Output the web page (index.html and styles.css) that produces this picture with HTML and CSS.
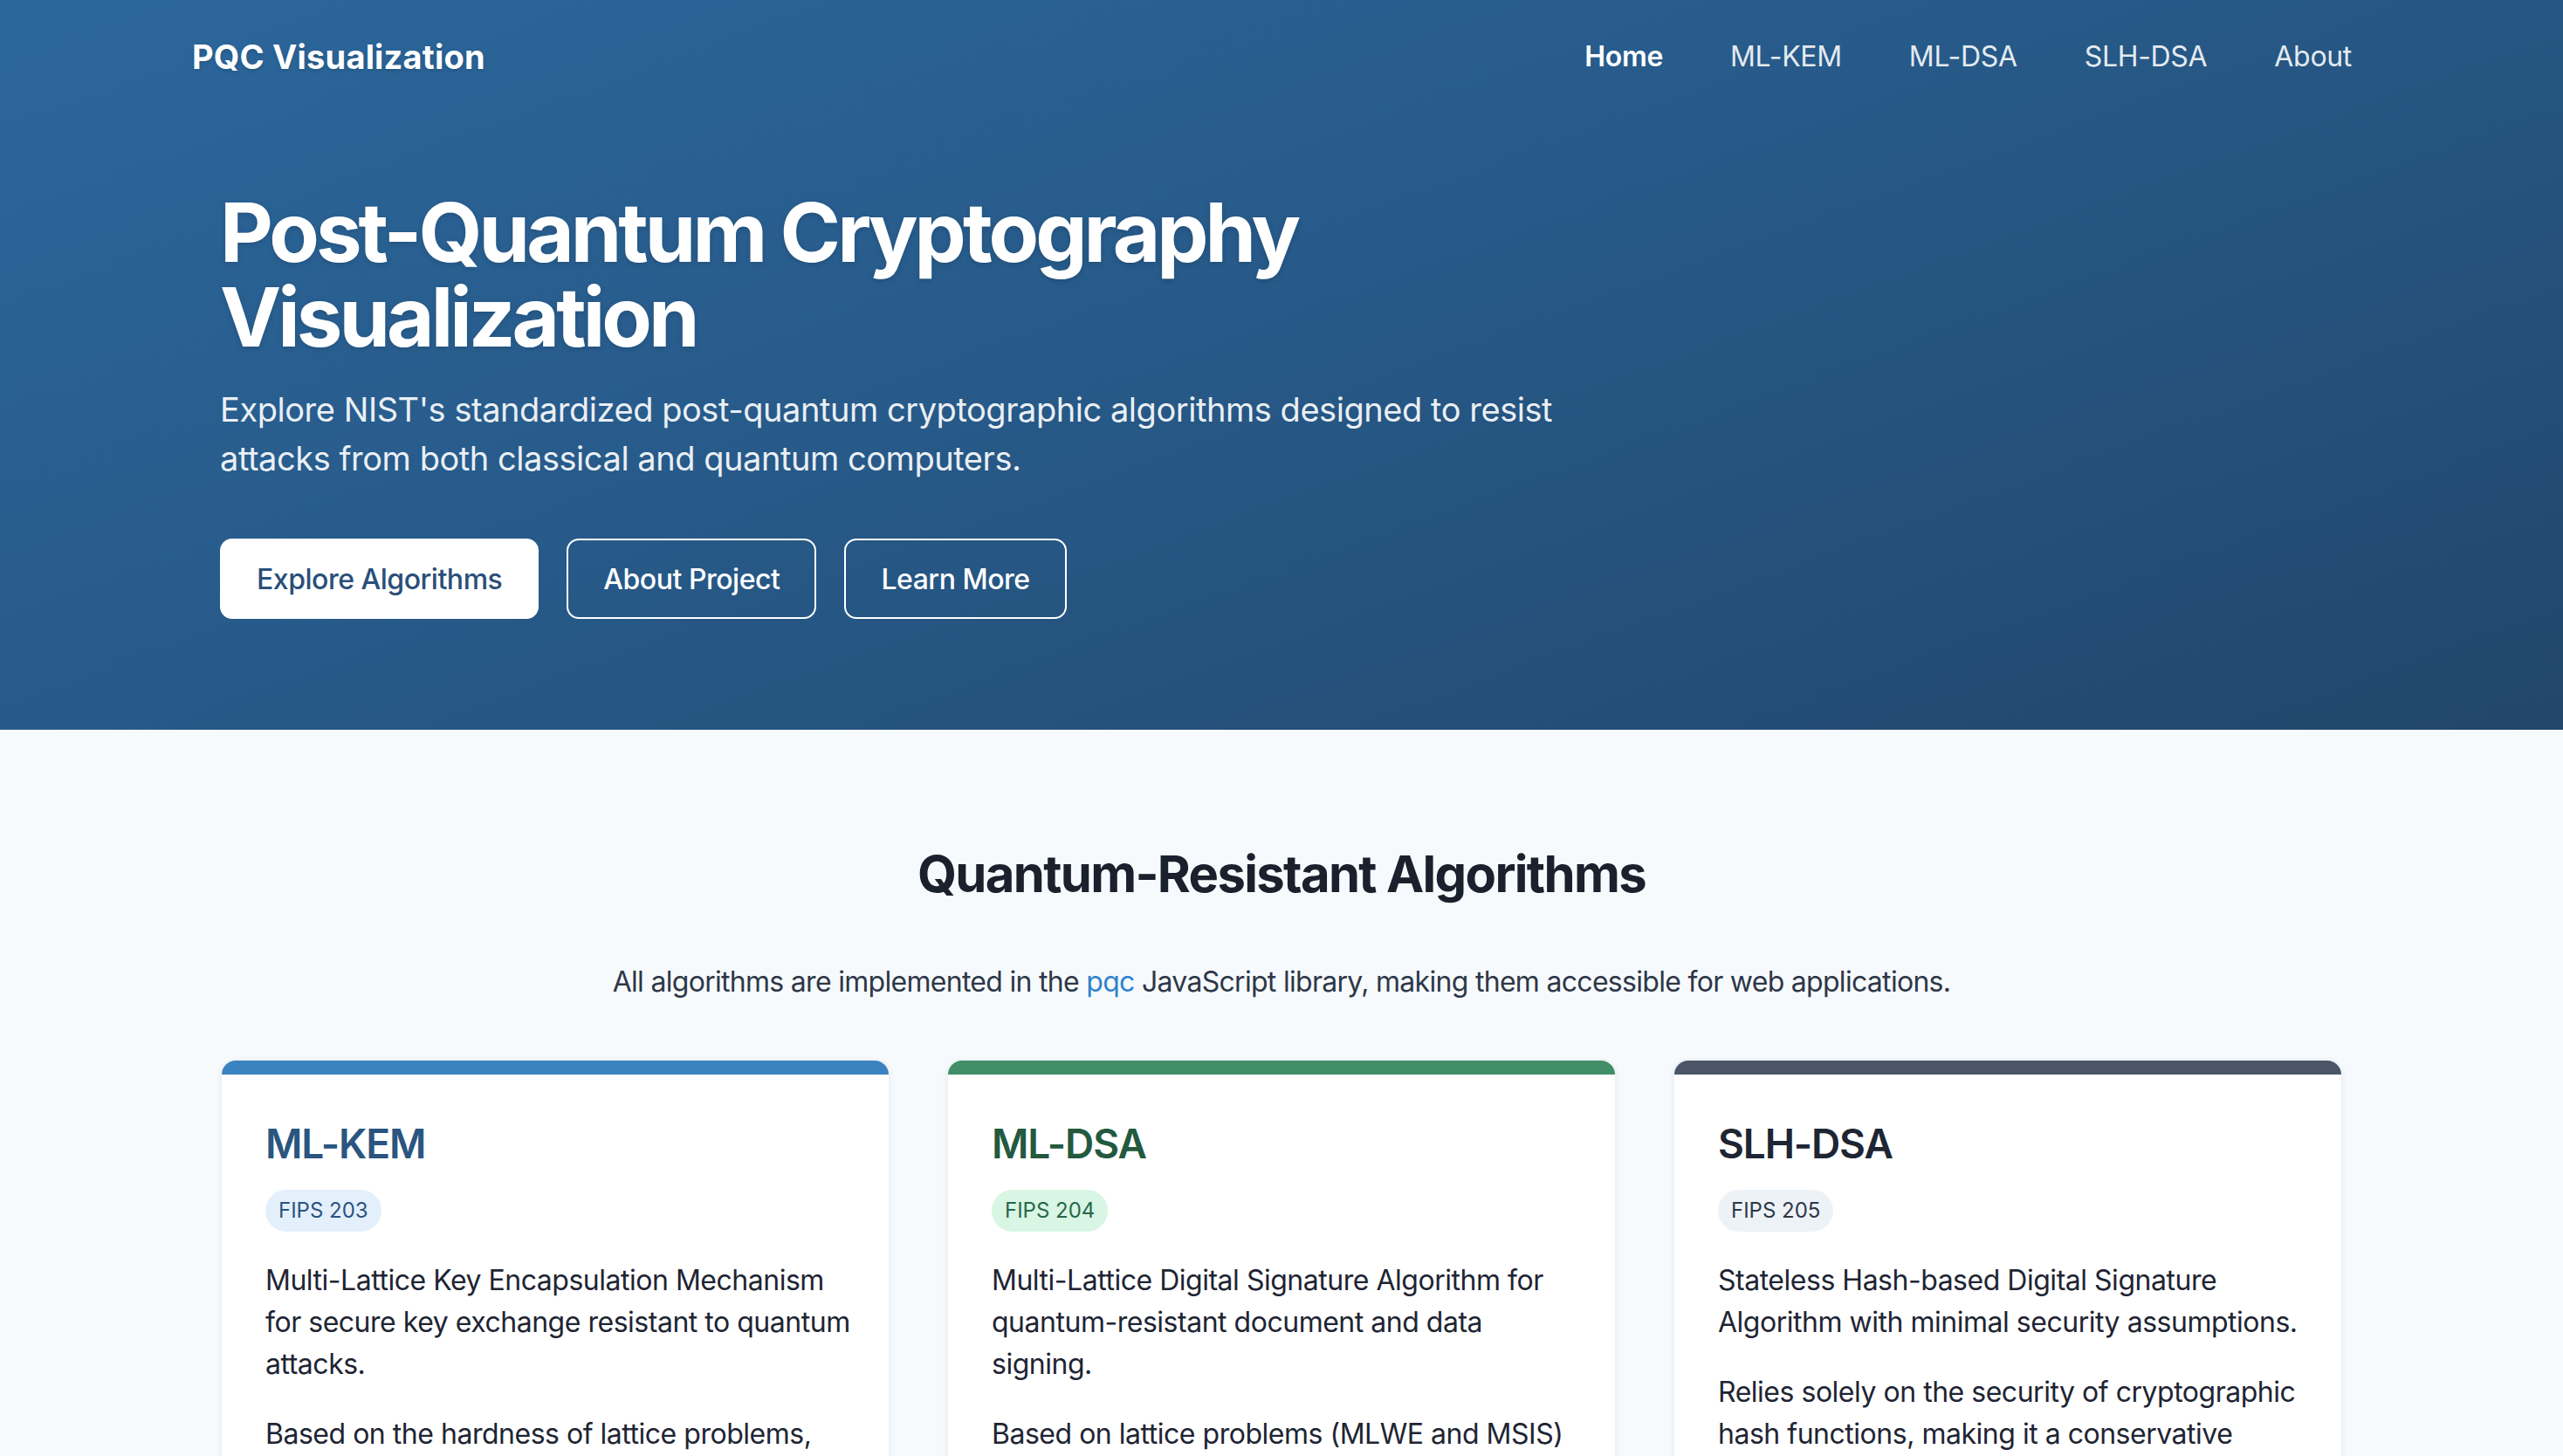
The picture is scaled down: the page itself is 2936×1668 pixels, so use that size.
FILE: index.html
```html
<!DOCTYPE html>
<html lang="en">
<head>
<meta charset="utf-8">
<title>PQC Visualization</title>
<link rel="stylesheet" href="styles.css">
</head>
<body>
<header class="hero">
  <nav class="navbar">
    <a class="brand" href="#">PQC Visualization</a>
    <ul class="nav-links">
      <li><a class="nav-link active" href="#">Home</a></li>
      <li><a class="nav-link" href="#">ML-KEM</a></li>
      <li><a class="nav-link" href="#">ML-DSA</a></li>
      <li><a class="nav-link" href="#">SLH-DSA</a></li>
      <li><a class="nav-link" href="#">About</a></li>
    </ul>
  </nav>
  <div class="hero-content">
    <h1 class="hero-title">Post-Quantum Cryptography<br>Visualization</h1>
    <p class="hero-sub">Explore NIST's standardized post-quantum cryptographic algorithms designed to resist attacks from both classical and quantum computers.</p>
    <div class="hero-actions">
      <a class="btn btn-solid" href="#">Explore Algorithms</a>
      <a class="btn btn-outline" href="#">About Project</a>
      <a class="btn btn-outline" href="#">Learn More</a>
    </div>
  </div>
</header>
<main class="algorithms">
  <h2 class="section-title">Quantum-Resistant Algorithms</h2>
  <p class="section-sub">All algorithms are implemented in the <a class="inline-link" href="#">pqc</a> JavaScript library, making them accessible for web applications.</p>
  <div class="card-grid">
    <article class="card card-blue">
      <div class="card-bar"></div>
      <div class="card-body">
        <h3 class="card-title">ML-KEM</h3>
        <span class="badge">FIPS 203</span>
        <p class="card-text">Multi-Lattice Key Encapsulation Mechanism for secure key exchange resistant to quantum attacks.</p>
        <p class="card-text">Based on the hardness of lattice problems, specifically the Module Learning With Errors (MLWE) problem.</p>
      </div>
    </article>
    <article class="card card-green">
      <div class="card-bar"></div>
      <div class="card-body">
        <h3 class="card-title">ML-DSA</h3>
        <span class="badge">FIPS 204</span>
        <p class="card-text">Multi-Lattice Digital Signature Algorithm for quantum-resistant document and data signing.</p>
        <p class="card-text">Based on lattice problems (MLWE and MSIS) providing strong security guarantees.</p>
      </div>
    </article>
    <article class="card card-gray">
      <div class="card-bar"></div>
      <div class="card-body">
        <h3 class="card-title">SLH-DSA</h3>
        <span class="badge">FIPS 205</span>
        <p class="card-text">Stateless Hash-based Digital Signature Algorithm with minimal security assumptions.</p>
        <p class="card-text">Relies solely on the security of cryptographic hash functions, making it a conservative choice.</p>
      </div>
    </article>
  </div>
</main>
</body>
</html>
```

FILE: styles.css
```css
* { box-sizing: border-box; }

html, body {
  margin: 0;
  padding: 0;
}

body {
  font-family: Inter, "Noto Sans", "Liberation Sans", sans-serif;
  background: #f7fafc;
  color: #1a202c;
}

a { text-decoration: none; color: inherit; }

.hero {
  background: linear-gradient(160deg, #2c679c 0%, #275a89 45%, #22466b 100%);
  color: #fff;
  padding-bottom: 127px;
}

.navbar {
  height: 128px;
  max-width: 2560px;
  margin: 0 auto;
  padding: 3px 32px 0;
  display: flex;
  align-items: center;
  justify-content: space-between;
}

.brand {
  font-size: 38px;
  font-weight: 700;
  line-height: 1.2;
  letter-spacing: 0.005em;
  color: #fff;
  text-shadow: 0 2px 4px rgba(0, 0, 0, 0.15);
}

.nav-links {
  list-style: none;
  margin: 0 6px 0 0;
  padding: 0;
  display: flex;
  gap: 45px;
}

.nav-link {
  display: block;
  padding: 0 16px;
  font-size: 32px;
  line-height: 1.2;
  font-weight: 400;
  color: rgba(255, 255, 255, 0.9);
  letter-spacing: -0.01em;
}

.nav-link.active {
  font-weight: 600;
  color: #fff;
}

.hero-content {
  max-width: 2432px;
  margin: 0 auto;
  padding-top: 90px;
}

.hero-title {
  margin: 0;
  font-size: 94px;
  line-height: 97px;
  font-weight: 700;
  letter-spacing: -0.042em;
  text-shadow: 0 2px 6px rgba(0, 0, 0, 0.15);
}

.hero-sub {
  margin: 29px 0 0;
  max-width: 1560px;
  font-size: 38px;
  line-height: 56px;
  color: rgba(255, 255, 255, 0.92);
  letter-spacing: -0.012em;
}

.hero-actions {
  margin-top: 64px;
  display: flex;
  gap: 32px;
}

.btn {
  height: 92px;
  padding: 0 40px;
  display: inline-flex;
  align-items: center;
  justify-content: center;
  border-radius: 14px;
  font-size: 32px;
  font-weight: 500;
  letter-spacing: -0.015em;
}

.btn-solid {
  background: #fff;
  color: #2a4f79;
  border: 2px solid #fff;
}

.btn-outline {
  background: transparent;
  color: #fff;
  border: 2px solid #fff;
}

.algorithms {
  max-width: 2432px;
  margin: 0 auto;
  padding-top: 129px;
}

.section-title {
  margin: 0;
  text-align: center;
  font-size: 58px;
  line-height: 72px;
  font-weight: 700;
  letter-spacing: -0.029em;
  color: #1a202c;
}

.section-sub {
  margin: 64px 0 0;
  text-align: center;
  font-size: 32px;
  line-height: 48px;
  color: #2d3748;
  letter-spacing: -0.022em;
}

.inline-link { color: #3182ce; }

.card-grid {
  margin-top: 64px;
  display: grid;
  grid-template-columns: repeat(3, 1fr);
  gap: 64px;
}

.card {
  background: #fff;
  border: 2px solid #edf2f7;
  border-radius: 18px;
  overflow: hidden;
  box-shadow: 0 2px 6px rgba(0, 0, 0, 0.05);
}

.card-bar { height: 16px; }
.card-blue .card-bar { background: #3a82c0; }
.card-green .card-bar { background: #418e67; }
.card-gray .card-bar { background: #4a5568; }

.card-body {
  padding: 52px 44px 48px 50px;
}

.card-title {
  margin: 0 0 25px;
  font-size: 46px;
  line-height: 1.2;
  font-weight: 600;
  letter-spacing: -0.025em;
}

.card-blue .card-title { color: #2a5580; }
.card-green .card-title { color: #23593f; }
.card-gray .card-title { color: #1e2533; }

.badge {
  display: inline-block;
  height: 48px;
  padding: 0 15px;
  border-radius: 24px;
  font-size: 24px;
  line-height: 48px;
  font-weight: 400;
  letter-spacing: 0;
}

.card-blue .badge { background: #e3f0fb; color: #2c5282; }
.card-green .badge { background: #d9f5e4; color: #276749; }
.card-gray .badge { background: #edf2f7; color: #2d3748; }

.card-text {
  margin: 32px 0 0;
  font-size: 32px;
  line-height: 48px;
  color: #1e2533;
  letter-spacing: -0.015em;
}
```
